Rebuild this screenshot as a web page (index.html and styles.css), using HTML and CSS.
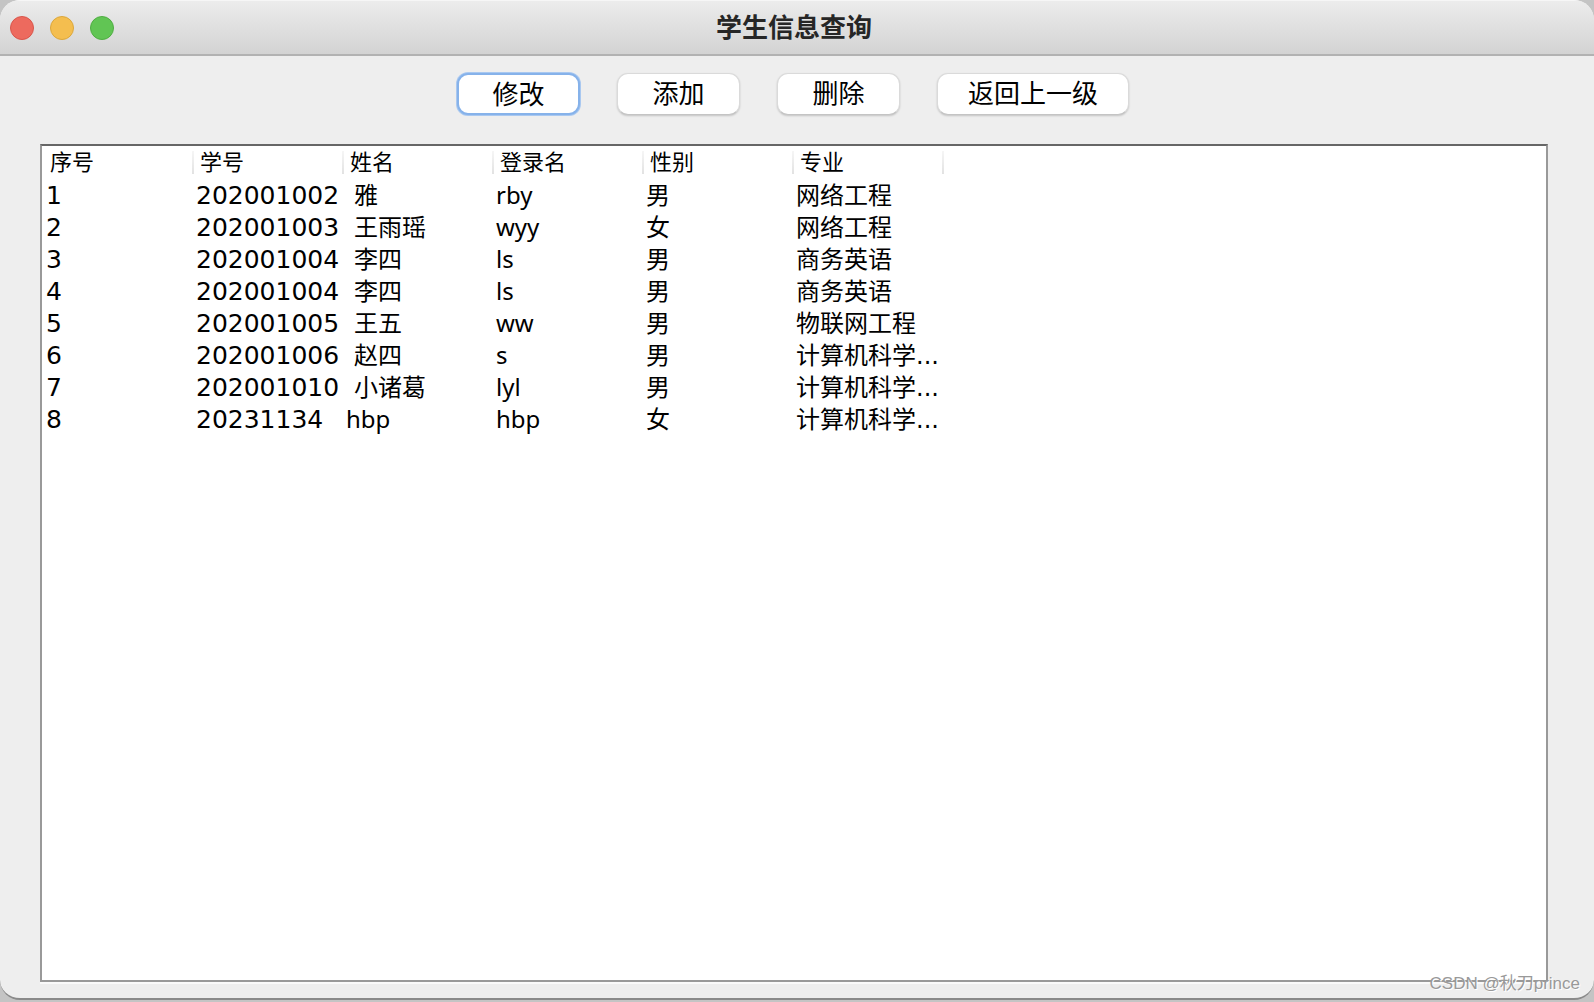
FILE: index.html
```html
<!DOCTYPE html>
<html lang="zh-CN">
<head>
<meta charset="utf-8">
<title>学生信息查询</title>
<link rel="stylesheet" href="styles.css">
</head>
<body>
<div class="window">
  <header class="titlebar">
    <div class="lights">
      <button class="light light-close" type="button" aria-label="关闭"></button>
      <button class="light light-minimize" type="button" aria-label="最小化"></button>
      <button class="light light-zoom" type="button" aria-label="缩放"></button>
    </div>
    <h1 class="title">学生信息查询</h1>
  </header>
  <main class="content">
    <div class="toolbar">
      <button class="action action-focused" type="button">修改</button>
      <button class="action" type="button">添加</button>
      <button class="action" type="button">删除</button>
      <button class="action" type="button">返回上一级</button>
    </div>
    <div class="scroll-pane">
      <table class="students">
        <thead>
          <tr><th>序号</th><th>学号</th><th>姓名</th><th>登录名</th><th>性别</th><th>专业</th></tr>
        </thead>
        <tbody>
          <tr><td class="num">1</td><td class="num">202001002</td><td class="name">雅</td><td>rby</td><td>男</td><td>网络工程</td></tr>
          <tr><td class="num">2</td><td class="num">202001003</td><td class="name">王雨瑶</td><td>wyy</td><td>女</td><td>网络工程</td></tr>
          <tr><td class="num">3</td><td class="num">202001004</td><td class="name">李四</td><td>ls</td><td>男</td><td>商务英语</td></tr>
          <tr><td class="num">4</td><td class="num">202001004</td><td class="name">李四</td><td>ls</td><td>男</td><td>商务英语</td></tr>
          <tr><td class="num">5</td><td class="num">202001005</td><td class="name">王五</td><td>ww</td><td>男</td><td>物联网工程</td></tr>
          <tr><td class="num">6</td><td class="num">202001006</td><td class="name">赵四</td><td>s</td><td>男</td><td>计算机科学<span class="dots">...</span></td></tr>
          <tr><td class="num">7</td><td class="num">202001010</td><td class="name">小诸葛</td><td>lyl</td><td>男</td><td>计算机科学<span class="dots">...</span></td></tr>
          <tr><td class="num">8</td><td class="num">20231134</td><td>hbp</td><td>hbp</td><td>女</td><td>计算机科学<span class="dots">...</span></td></tr>
        </tbody>
      </table>
    </div>
  </main>
</div>
<div class="watermark">CSDN @秋刀prince</div>
</body>
</html>
```
FILE: styles.css
```css
* {
  box-sizing: border-box;
}

body {
  margin: 0;
  background: #c4c4c4;
  color: #000;
  font-family: "Noto Sans", "Noto Sans CJK SC", sans-serif;
}

.window {
  display: flex;
  flex-direction: column;
  height: calc(100vh - 2px);
  background: #eee;
  border-bottom: 2px solid #8a8a8a;
  border-radius: 20px;
  overflow: hidden;
}

.titlebar {
  display: grid;
  grid-template-columns: 1fr auto 1fr;
  align-items: center;
  height: 56px;
  flex: none;
  padding: 0 16px 0 10px;
  background: linear-gradient(#ececec, #d3d3d3);
  border-top: 1px solid #f6f6f6;
  border-bottom: 2px solid #b2b2b2;
}

.lights {
  display: flex;
  gap: 16px;
}

.light {
  width: 24px;
  height: 24px;
  padding: 0;
  border: 1px solid;
  border-radius: 50%;
}

.light-close {
  background: #ed6a5e;
  border-color: #d8564b;
}

.light-minimize {
  background: #f4be4f;
  border-color: #dba73c;
}

.light-zoom {
  background: #61c554;
  border-color: #50ad43;
}

.title {
  margin: 0;
  padding-bottom: 4px;
  color: #262626;
  font-family: "Noto Sans CJK SC", sans-serif;
  font-size: 26px;
  font-weight: 700;
  line-height: 48px;
}

.content {
  display: flex;
  flex: 1;
  flex-direction: column;
  min-height: 0;
  padding: 17px 46px 16px 40px;
}

.toolbar {
  display: flex;
  justify-content: center;
  gap: 37px;
  padding: 0 2px 29px 0;
}

.action {
  min-width: 123px;
  height: 42px;
  padding: 0 30px 4px;
  border: 1px solid #dadada;
  border-bottom-color: #c4c4c4;
  border-radius: 11px;
  background: #fff;
  box-shadow: 0 1px 2px rgba(0, 0, 0, 0.18);
  color: #000;
  font-family: "Noto Sans CJK SC", sans-serif;
  font-size: 26px;
  line-height: 36px;
}

.action-focused {
  border: 2px solid #86b2ea;
  padding: 0 29px 4px;
  box-shadow: 0 0 0 1px #a9c8f0;
}

.scroll-pane {
  flex: 1;
  min-height: 0;
  overflow: hidden;
  background: #fff;
  border: 2px solid #999;
  border-top-color: #666;
  box-shadow: 0 2px 0 #fafafa;
}

.students {
  width: 902px;
  table-layout: fixed;
  border-collapse: collapse;
}

.students th {
  width: 150px;
  height: 33px;
  padding: 0 8px 4px;
  background: linear-gradient(#f6f6f6, #e2e2e2) left 0 top 5px / 2px 23px no-repeat;
  font-size: 22px;
  font-family: "Noto Sans CJK SC", sans-serif;
  font-weight: 400;
  line-height: 29px;
  text-align: left;
}

.students th:first-child {
  background: none;
}

.students th:last-child {
  width: 152px;
  background:
    linear-gradient(#f6f6f6, #e2e2e2) left 0 top 5px / 2px 23px no-repeat,
    linear-gradient(#f6f6f6, #e2e2e2) right 0 top 5px / 2px 23px no-repeat;
}

.students td {
  height: 32px;
  padding: 0 4px;
  font-size: 24px;
  line-height: 32px;
  white-space: nowrap;
}

.students .num {
  padding-top: 1px;
  font-family: "DejaVu Sans", sans-serif;
  font-size: 25px;
  line-height: 31px;
}

.dots {
  font-family: "DejaVu Sans", sans-serif;
  line-height: 16px;
}

.students .name {
  padding-left: 12px;
}

.watermark {
  position: absolute;
  right: 14px;
  bottom: 8px;
  color: #999;
  font-family: "Liberation Sans", "Noto Sans CJK SC", sans-serif;
  font-size: 17px;
  line-height: 20px;
  text-shadow: 1px 1px 0 #fff;
}
```
